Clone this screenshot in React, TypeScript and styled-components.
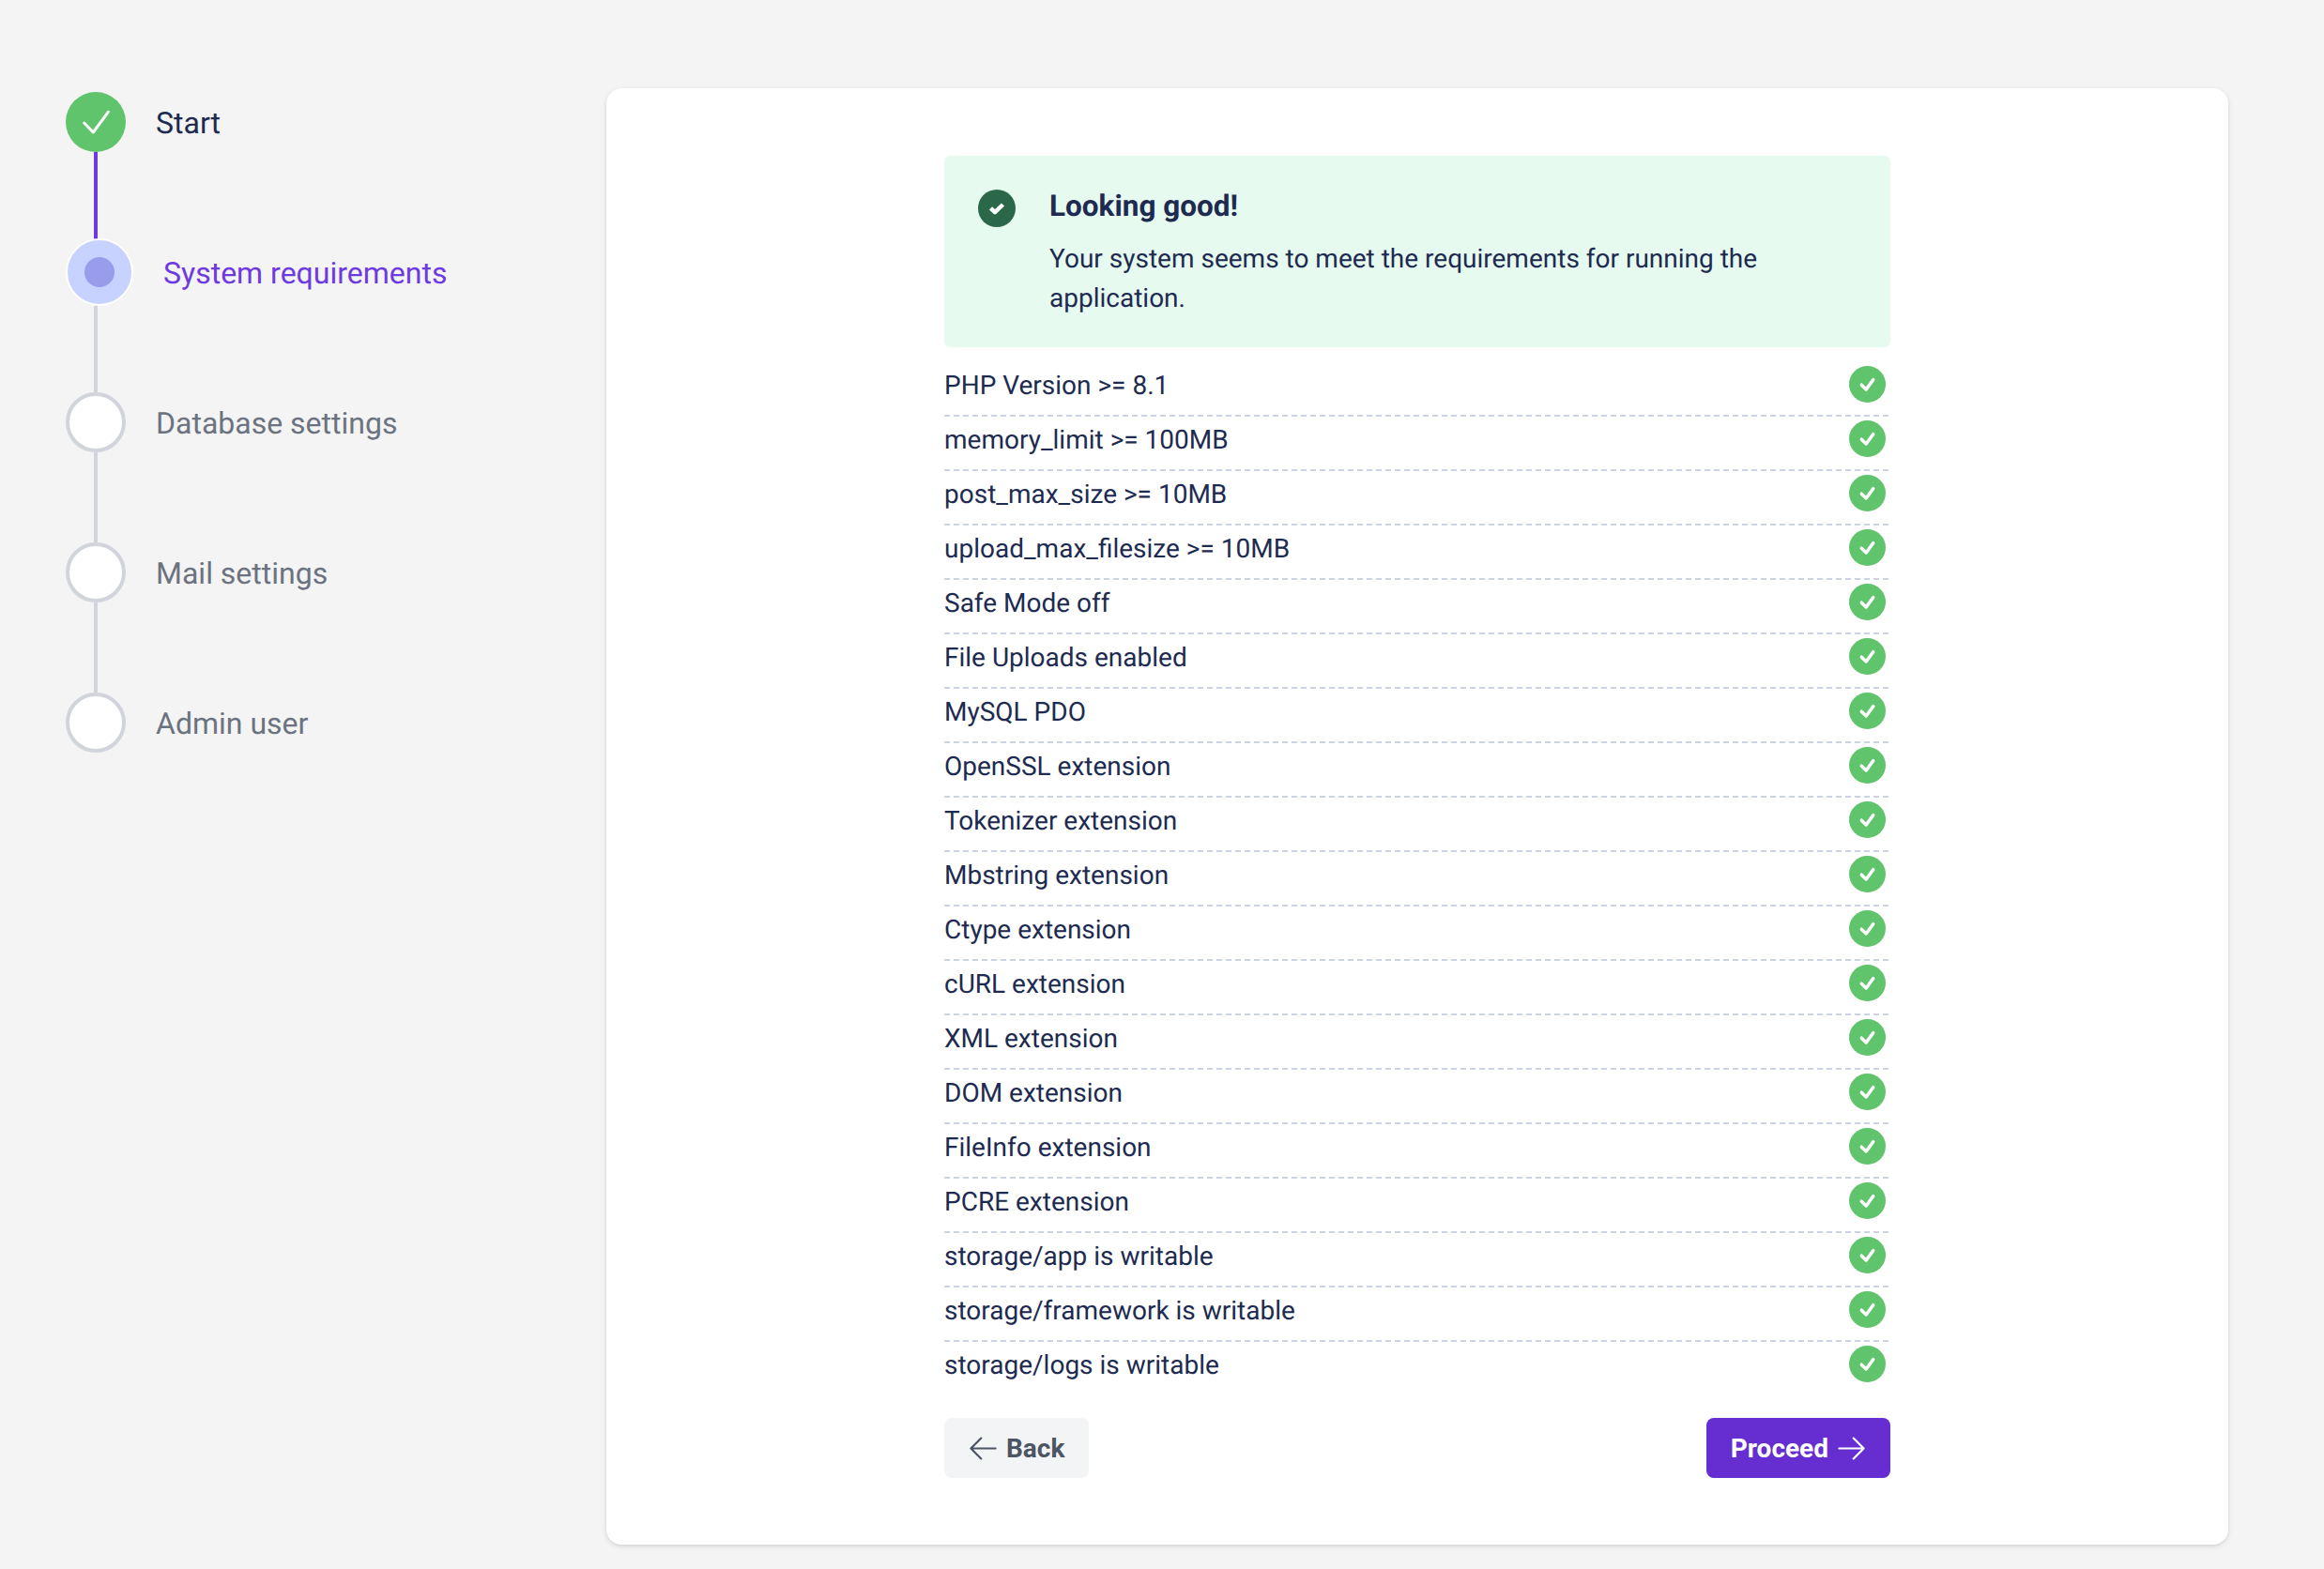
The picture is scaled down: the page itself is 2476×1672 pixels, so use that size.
import React from "react"
import styled, { createGlobalStyle } from "styled-components"

const GlobalStyle = createGlobalStyle`
  html, body {
    margin: 0;
    padding: 0;
    background: #f4f4f4;
    font-family: Roboto, "Liberation Sans", sans-serif;
    text-rendering: geometricPrecision;
  }
`

const Page = styled.div`
  width: 2476px;
  height: 1672px;
  box-sizing: border-box;
  padding: 94px 102px 26px 70px;
  display: flex;
  overflow: hidden;
`

const Sidebar = styled.ul`
  width: 576px;
  flex: none;
  margin: 4px 0 0;
  padding: 0;
  list-style: none;
`

const StepRow = styled.div`
  display: flex;
  align-items: center;
  height: 64px;
`

const StepLabel = styled.span<{ $state: string }>`
  margin-left: 32px;
  padding-top: 2px;
  font-size: 32px;
  line-height: 40px;
  color: ${(p) =>
    p.$state === "done" ? "#1e2b50" : p.$state === "active" ? "#6d3ae0" : "#6b7280"};
`

const DoneCircle = styled.span`
  width: 64px;
  height: 64px;
  flex: none;
  border-radius: 50%;
  background: #60c46c;
  color: #fff;
  display: flex;
  align-items: center;
  justify-content: center;
`

const ActiveCircle = styled.span`
  width: 68px;
  height: 68px;
  flex: none;
  margin: -3px 0 -3px 0;
  border: 2px solid #fff;
  border-radius: 50%;
  background: #c7d2fe;
  display: flex;
  align-items: center;
  justify-content: center;
`

const ActiveDot = styled.span`
  width: 32px;
  height: 32px;
  border-radius: 50%;
  background: #989ceb;
`

const EmptyCircle = styled.span`
  width: 64px;
  height: 64px;
  flex: none;
  box-sizing: border-box;
  border: 4px solid #d1d5db;
  border-radius: 50%;
  background: #fff;
`

const Connector = styled.div<{ $done: boolean }>`
  width: 4px;
  height: 96px;
  margin-left: 30px;
  background: ${(p) => (p.$done ? "#6d3ae0" : "#d1d5db")};
`

const Card = styled.main`
  width: 1728px;
  height: 1552px;
  box-sizing: border-box;
  padding: 72px 360px 0;
  background: #fff;
  border-radius: 16px;
  box-shadow: 0 2px 6px rgba(0, 0, 0, 0.1), 0 1px 3px rgba(0, 0, 0, 0.06);
`

const Alert = styled.div`
  display: flex;
  gap: 36px;
  height: 204px;
  box-sizing: border-box;
  padding: 36px;
  background: #e6faf0;
  border-radius: 6px;
`

const AlertIcon = styled.span`
  width: 40px;
  height: 40px;
  flex: none;
  border-radius: 50%;
  background: #2a6849;
  color: #fff;
  display: flex;
  align-items: center;
  justify-content: center;
`

const AlertTitle = styled.h3`
  margin: 0 0 17px;
  font-size: 31.5px;
  line-height: 36px;
  font-weight: 700;
  color: #1e2b50;
`

const AlertText = styled.p`
  margin: 0;
  font-size: 28px;
  line-height: 42px;
  color: #1e2b50;
`

const List = styled.ul`
  margin: 16px 0 0;
  padding: 0;
  list-style: none;
`

const Row = styled.li`
  height: 58px;
  box-sizing: border-box;
  padding-top: 4px;
  display: flex;
  justify-content: space-between;
  background: repeating-linear-gradient(90deg, #cbd3e3 0 6px, transparent 6px 10px) left bottom / 100% 2px no-repeat;
  font-size: 28px;
  line-height: 42px;
  color: #1e2b50;

  &:last-child {
    background: none;
  }
`

const RowIcon = styled.span`
  width: 39px;
  height: 39px;
  flex: none;
  margin-right: 5px;
  border-radius: 50%;
  background: #60c46c;
  color: #fff;
  display: flex;
  align-items: center;
  justify-content: center;
`

const Footer = styled.div`
  margin-top: 23px;
  display: flex;
  justify-content: space-between;
`

const Button = styled.button<{ $primary?: boolean }>`
  height: 64px;
  box-sizing: border-box;
  padding: ${(p) => (p.$primary ? "0 24px 0 26px" : "0 26px 0 24px")};
  display: flex;
  align-items: center;
  gap: 7px;
  border: none;
  border-radius: 8px;
  font-family: inherit;
  font-size: 28px;
  font-weight: 700;
  background: ${(p) => (p.$primary ? "#662dd1" : "#f3f4f6")};
  color: ${(p) => (p.$primary ? "#fff" : "#4b5563")};
`

const StepCheck = () => (
  <svg width="64" height="64" viewBox="0 0 64 64" fill="none" stroke="currentColor" strokeWidth="3" strokeLinecap="round" strokeLinejoin="round">
    <path d="M19.7 33 29.3 43 45.3 21.3" />
  </svg>
)

const RowCheck = () => (
  <svg width="39" height="39" viewBox="0 0 39 39" fill="none" stroke="currentColor" strokeWidth="3.5" strokeLinecap="round" strokeLinejoin="round">
    <path d="M13.3 20.2 18.2 25 25.7 14.7" />
  </svg>
)

const AlertCheck = () => (
  <svg width="40" height="40" viewBox="0 0 40 40" fill="none" stroke="currentColor" strokeWidth="4.5" strokeLinejoin="round">
    <path d="M13.5 19.8 18 24.2 26.5 16" />
  </svg>
)

const ArrowLeftIcon = () => (
  <svg width="35" height="35" viewBox="0 0 24 24" fill="none" stroke="currentColor" strokeWidth="1.5" strokeLinecap="round" strokeLinejoin="round">
    <path d="M10.5 19.5 3 12m0 0 7.5-7.5M3 12h18" />
  </svg>
)

const ArrowRightIcon = () => (
  <svg width="35" height="35" viewBox="0 0 24 24" fill="none" stroke="currentColor" strokeWidth="1.5" strokeLinecap="round" strokeLinejoin="round">
    <path d="M13.5 4.5 21 12m0 0-7.5 7.5M21 12H3" />
  </svg>
)

const steps = [
  { label: "Start", state: "done" },
  { label: "System requirements", state: "active" },
  { label: "Database settings", state: "todo" },
  { label: "Mail settings", state: "todo" },
  { label: "Admin user", state: "todo" },
]

const requirements = [
  "PHP Version >= 8.1",
  "memory_limit >= 100MB",
  "post_max_size >= 10MB",
  "upload_max_filesize >= 10MB",
  "Safe Mode off",
  "File Uploads enabled",
  "MySQL PDO",
  "OpenSSL extension",
  "Tokenizer extension",
  "Mbstring extension",
  "Ctype extension",
  "cURL extension",
  "XML extension",
  "DOM extension",
  "FileInfo extension",
  "PCRE extension",
  "storage/app is writable",
  "storage/framework is writable",
  "storage/logs is writable",
]

const App: React.FC = () => {
  return (
    <Page>
      <GlobalStyle />
      <Sidebar>
        {steps.map((step, index) => (
          <li key={step.label}>
            <StepRow>
              {step.state === "done" && (
                <DoneCircle>
                  <StepCheck />
                </DoneCircle>
              )}
              {step.state === "active" && (
                <ActiveCircle>
                  <ActiveDot />
                </ActiveCircle>
              )}
              {step.state === "todo" && <EmptyCircle />}
              <StepLabel $state={step.state}>{step.label}</StepLabel>
            </StepRow>
            {index < steps.length - 1 && <Connector $done={step.state === "done"} />}
          </li>
        ))}
      </Sidebar>
      <Card>
        <Alert>
          <AlertIcon>
            <AlertCheck />
          </AlertIcon>
          <div>
            <AlertTitle>Looking good!</AlertTitle>
            <AlertText>
              Your system seems to meet the requirements for running the application.
            </AlertText>
          </div>
        </Alert>
        <List>
          {requirements.map((item) => (
            <Row key={item}>
              {item}
              <RowIcon>
                <RowCheck />
              </RowIcon>
            </Row>
          ))}
        </List>
        <Footer>
          <Button>
            <ArrowLeftIcon />
            Back
          </Button>
          <Button $primary>
            Proceed
            <ArrowRightIcon />
          </Button>
        </Footer>
      </Card>
    </Page>
  )
}

export default App
